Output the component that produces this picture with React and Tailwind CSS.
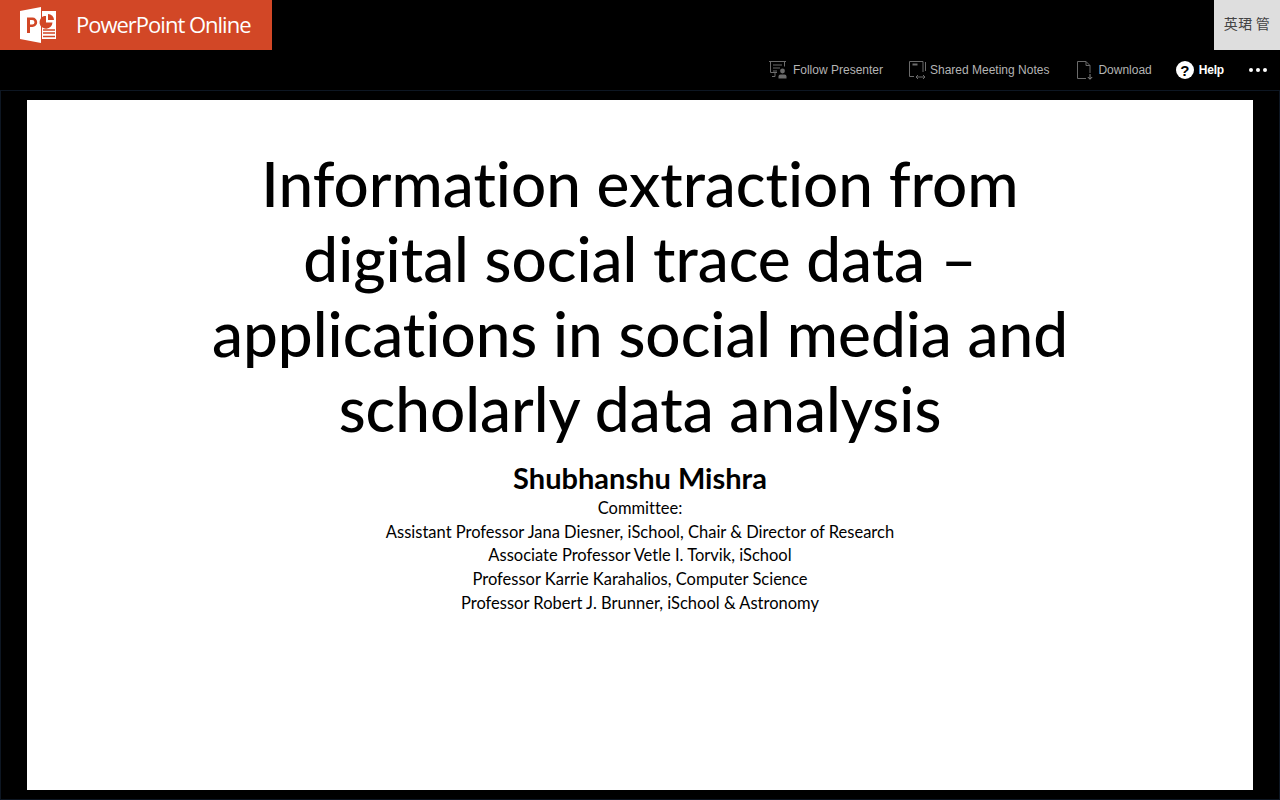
function Logo() {
  return (
    <svg width="38" height="38" viewBox="0 0 38 38" className="shrink-0">
      <path d="M1 5 L22 1 V37 L1 33 Z" fill="#fff" />
      <path d="M23 5 H37 V33 H23 Z" fill="#fff" />
      <path d="M8 11.5 h5.5 a4.6 4.6 0 0 1 0 9.4 H11 V27 H8 Z M11 14 v4.6 h2.2 a2.3 2.3 0 0 0 0 -4.6 Z" fill="#D24726" fillRule="evenodd" />
      <path d="M25 10 a6.5 6.5 0 1 0 8.5 6.5 h-6.5 v-6.5 z" fill="#D24726" />
      <path d="M29 8 a6 6 0 0 1 6 6 h-6 z" fill="#D24726" />
      <path d="M24 24 H36 M24 27 H36 M24 30.4 H36" stroke="#D24726" strokeWidth="1.5" />
    </svg>
  );
}

function PresenterIcon() {
  return (
    <svg width="20" height="20" viewBox="0 0 20 20" fill="none" className="shrink-0">
      <path d="M1 1.5 H18 M2.5 1.5 V12.5 H9 M16.5 1.5 V6.5 M5 5 H14 M5 8 H12 M5 11 H9 M7 12.5 V16.5 H4" stroke="#6b6b6b" strokeWidth="1" />
      <circle cx="14.5" cy="11" r="2.4" fill="#6b6b6b" />
      <path d="M10.5 18.5 V16.5 Q10.5 14.5 12.5 14.5 H16.5 Q18.5 14.5 18.5 16.5 V18.5 Z" fill="#6b6b6b" />
    </svg>
  );
}

function NotesIcon() {
  return (
    <svg width="20" height="20" viewBox="0 0 20 20" fill="none" className="shrink-0">
      <path d="M15 12 V1.5 H1.5 V16.5 H6" stroke="#6b6b6b" strokeWidth="1" />
      <path d="M17.5 2 V11" stroke="#6b6b6b" strokeWidth="1" />
      <path d="M4.5 4.5 H9.5" stroke="#6b6b6b" strokeWidth="2" />
      <path d="M8 17 H17 M10 15 L8 17 L10 19 M15 15 L17 17 L15 19" stroke="#6b6b6b" strokeWidth="1" />
    </svg>
  );
}

function DownloadIcon() {
  return (
    <svg width="18" height="20" viewBox="0 0 18 20" fill="none" className="shrink-0">
      <path d="M10 18.5 H1.5 V1.5 H10 L14 5.5 V13" stroke="#6b6b6b" strokeWidth="1" />
      <path d="M10 1.5 V5.5 H14" stroke="#6b6b6b" strokeWidth="1" />
      <path d="M14 14 V19 M11.8 17 L14 19.3 L16.2 17" stroke="#8a8a8a" strokeWidth="1" />
    </svg>
  );
}

function HelpIcon() {
  return (
    <span className="flex h-[18px] w-[18px] shrink-0 items-center justify-center rounded-full bg-white font-['Liberation_Sans',sans-serif] text-[15px] font-bold leading-none text-black">
      ?
    </span>
  );
}

function ToolItem({ icon, label, className = "" }) {
  return (
    <div className={`flex items-center ${className}`}>
      {icon}
      <span className="whitespace-nowrap">{label}</span>
    </div>
  );
}

export default function App() {
  return (
    <div className="flex h-[800px] w-[1280px] flex-col overflow-hidden bg-black font-['Liberation_Sans',sans-serif]">
      <header className="flex h-[50px] shrink-0 items-start justify-between">
        <div className="flex h-[50px] w-[272px] items-center bg-[#D24726] pl-[19px]">
          <Logo />
          <span className="ml-[19px] mb-[2px] whitespace-nowrap font-['Open_Sans',sans-serif] text-[22px] font-medium tracking-[-1px] text-white">
            PowerPoint Online
          </span>
        </div>
        <div className="flex h-[47px] w-[66px] items-center justify-center self-start bg-[#dedede] font-['Noto_Sans_CJK_SC',sans-serif] text-[14px] tracking-[0.3px] text-[#444444] shadow-[0_3px_0_#dedede]">
          英珺 管
        </div>
      </header>

      <div className="flex h-[40px] shrink-0 items-center justify-end pr-[13px] text-[12px] text-[#b4b4b4]">
        <ToolItem icon={<PresenterIcon />} label="Follow Presenter" className="gap-[5px]" />
        <ToolItem icon={<NotesIcon />} label="Shared Meeting Notes" className="ml-[25px] gap-[2px]" />
        <ToolItem icon={<DownloadIcon />} label="Download" className="ml-[27px] gap-[4px]" />
        <ToolItem icon={<HelpIcon />} label="Help" className="ml-[24px] gap-[5px] font-bold tracking-[-0.2px] text-white" />
        <div className="ml-[25px] flex w-[18px] justify-between">
          <span className="h-[4px] w-[4px] rounded-full bg-white" />
          <span className="h-[4px] w-[4px] rounded-full bg-white" />
          <span className="h-[4px] w-[4px] rounded-full bg-white" />
        </div>
      </div>

      <main className="flex h-[710px] items-start justify-center border border-[#0d1622] pt-[9px]">
        <section className="flex h-[690px] w-[1226px] flex-col items-center bg-white pt-[46px] font-['Lato',sans-serif] text-black [font-variant-ligatures:none]">
          <h1 className="text-center text-[62px] font-medium leading-[75px]">
            Information extraction from
            <br />
            digital social trace data –
            <br />
            applications in social media and
            <br />
            scholarly data analysis
          </h1>
          <p className="mt-[15px] text-[29px] font-bold leading-[34px]">Shubhanshu Mishra</p>
          <div className="mt-[2px] text-center text-[16.5px] leading-[23.7px]">
            <p>Committee:</p>
            <p>Assistant Professor Jana Diesner, iSchool, Chair &amp; Director of Research</p>
            <p>Associate Professor Vetle I. Torvik, iSchool</p>
            <p>Professor Karrie Karahalios, Computer Science</p>
            <p>Professor Robert J. Brunner, iSchool &amp; Astronomy</p>
          </div>
        </section>
      </main>
    </div>
  );
}
